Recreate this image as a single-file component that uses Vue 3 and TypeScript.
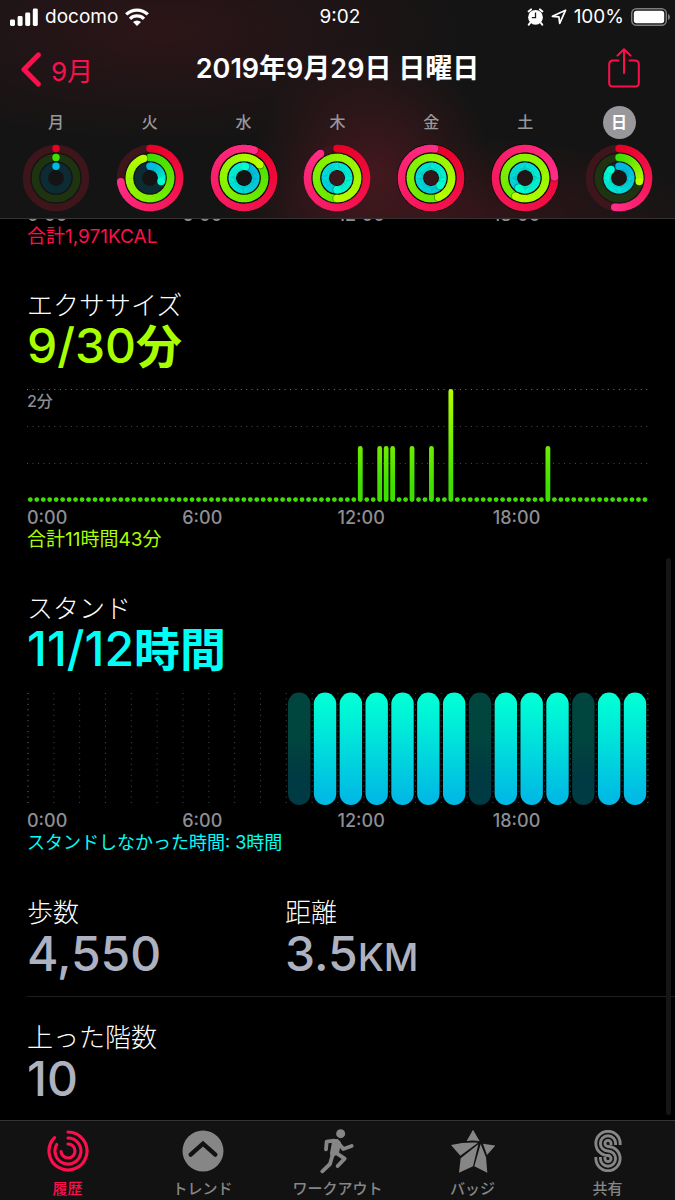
<script setup lang="ts">
interface Day {
  label: string
  move: number
  exercise: number
  stand: number
  selected?: boolean
}

interface Segment {
  d: string
  color: string
}

interface Ring {
  radius: number
  track: string
  startColor: string
  endColor: string
  value: number
  segments: Segment[]
  tip: { x: number; y: number }
  shade: { x: number; y: number }
}

const CENTER = 34

const ringStyles = [
  { radius: 29.5, track: '#3d151b', from: [233, 0, 38], to: [255, 45, 135] },
  { radius: 20.6, track: '#1e3310', from: [63, 224, 0], to: [184, 255, 0] },
  { radius: 11.7, track: '#0c2b33', from: [0, 184, 228], to: [0, 255, 208] },
]

const days: Day[] = [
  { label: '月', move: 0, exercise: 0, stand: 0 },
  { label: '火', move: 0.73, exercise: 0.95, stand: 0.3 },
  { label: '水', move: 1.056, exercise: 1.14, stand: 1.02 },
  { label: '木', move: 0.905, exercise: 1.5, stand: 1.5 },
  { label: '金', move: 1.02, exercise: 1.44, stand: 1.36 },
  { label: '土', move: 1.245, exercise: 1.575, stand: 1.59 },
  { label: '日', move: 0.523, exercise: 0.277, stand: 0.88, selected: true },
]

function pointAt(turn: number, radius: number) {
  const angle = turn * Math.PI * 2
  return { x: CENTER + Math.sin(angle) * radius, y: CENTER - Math.cos(angle) * radius }
}

function mix(from: number[], to: number[], t: number): string {
  return `rgb(${from.map((c, i) => Math.round(c + (to[i] - c) * t)).join(',')})`
}

function buildRings(day: Day): Ring[] {
  return [day.move, day.exercise, day.stand].map((value, i) => {
    const style = ringStyles[i]
    const begin = Math.max(0, value - 1)
    const count = value > 0 ? 60 : 0
    const step = (value - begin) / 60
    const segments = Array.from({ length: count }, (_, n) => {
      const a = begin + n * step
      const b = a + step + (n < count - 1 ? 0.004 : 0)
      const p = pointAt(a, style.radius)
      const q = pointAt(b, style.radius)
      return {
        d: `M${p.x} ${p.y}A${style.radius} ${style.radius} 0 0 1 ${q.x} ${q.y}`,
        color: mix(style.from, style.to, a / value),
      }
    })
    return {
      radius: style.radius,
      track: style.track,
      startColor: mix(style.from, style.to, 0),
      endColor: mix(style.from, style.to, value > 0 ? 1 : 0),
      value,
      segments,
      tip: pointAt(value, style.radius),
      shade: pointAt(value + 0.8 / (style.radius * 6.28), style.radius),
    }
  })
}

const week = days.map((day) => ({ ...day, rings: buildRings(day) }))

const hours = ['0:00', '6:00', '12:00', '18:00']

const minutes: Record<number, number> = { 51: 1, 54: 1, 55: 1, 56: 1, 59: 1, 62: 1, 65: 2, 80: 1 }
const exerciseBars = Array.from({ length: 96 }, (_, i) => {
  const height = [4.8, 56, 113][minutes[i] ?? 0]
  return { x: i * 6.47 + 0.9, y: 113 - height, height }
})

const idleHours = [10, 17, 21]
const standBars = Array.from({ length: 14 }, (_, i) => ({
  x: (i + 10) * 25.83 + 2.7,
  idle: idleHours.includes(i + 10),
}))
</script>

<template>
  <div class="screen">
    <header class="top">
      <div class="status">
        <div class="status-left">
          <svg width="28" height="18" viewBox="0 0 28 18" fill="#fff">
            <rect x="0" y="11.5" width="5" height="6.5" rx="1.4" />
            <rect x="7.6" y="8" width="5" height="10" rx="1.4" />
            <rect x="15.2" y="4.5" width="5" height="13.5" rx="1.4" />
            <rect x="22.8" y="0.5" width="5" height="17.5" rx="1.4" />
          </svg>
          <span>docomo</span>
          <svg width="24" height="18" viewBox="0 0 24 18" fill="none" stroke="#fff" stroke-width="3.2">
            <path d="M1.2 6.4A15.6 15.6 0 0 1 22.8 6.4" />
            <path d="M5 10.8A10 10 0 0 1 19 10.8" />
            <path d="M12 18L8 14A5.8 5.8 0 0 1 16 14Z" fill="#fff" stroke="none" />
          </svg>
        </div>
        <time>9:02</time>
        <div class="status-right">
          <svg width="17" height="18" viewBox="0 0 17 18">
            <g stroke="#fff" stroke-width="2" stroke-linecap="round">
              <path d="M1.6 3.4L4 1.4M15.4 3.4L13 1.4M3.4 14.5L1.8 16.6M13.6 14.5L15.2 16.6" />
            </g>
            <circle cx="8.5" cy="9.3" r="7.4" fill="#fff" />
            <path d="M8.5 4.6V9.6H4.8" fill="none" stroke="#1a1818" stroke-width="1.3" />
          </svg>
          <svg width="16" height="16" viewBox="0 0 16 16" fill="none" stroke="#fff" stroke-width="1.7" stroke-linejoin="round">
            <path d="M14.6 1.2L1.4 7.3L7.9 7.9L8.7 14.4Z" />
          </svg>
          <span>100%</span>
          <svg width="39" height="18" viewBox="0 0 39 18">
            <rect x="0.7" y="0.7" width="34.6" height="16.6" rx="4.8" fill="none" stroke="#7f7d7d" stroke-width="1.4" />
            <rect x="2.8" y="2.7" width="30.4" height="12.6" rx="2.8" fill="#fff" />
            <path d="M37 5.8Q39 7 39 9T37 12.2Z" fill="#7f7d7d" />
          </svg>
        </div>
      </div>

      <div class="nav">
        <button class="back" type="button">
          <svg width="20" height="35" viewBox="0 0 20 35" fill="none" stroke="#fc0f4c" stroke-width="5" stroke-linecap="round" stroke-linejoin="round">
            <path d="M17.3 2.9L3 17.5L17.3 32.1" />
          </svg>
          <span>9月</span>
        </button>
        <h1>2019年9月29日 日曜日</h1>
        <button class="share" type="button" aria-label="共有">
          <svg width="32" height="40" viewBox="0 0 32 40" fill="none" stroke="#fc0f4c" stroke-width="2" stroke-linecap="round" stroke-linejoin="round">
            <path d="M10.5 12.6H5Q1.2 12.6 1.2 16.2V35Q1.2 38.6 5 38.6H27Q30.8 38.6 30.8 35V16.2Q30.8 12.6 27 12.6H21.5" />
            <path d="M16 25V1.8M9.4 7.6L16 1.2L22.6 7.6" />
          </svg>
        </button>
      </div>

      <div class="week">
        <button v-for="day in week" :key="day.label" class="day" type="button">
          <span class="day-label" :class="{ selected: day.selected }">{{ day.label }}</span>
          <svg width="68" height="68" viewBox="0 0 68 68" fill="none" stroke-width="7.5">
            <template v-for="ring in day.rings" :key="ring.radius">
              <circle v-if="ring.value >= 1" cx="34" cy="34" :r="ring.radius" stroke="#0a0505" stroke-width="8.8" />
              <circle cx="34" cy="34" :r="ring.radius" :stroke="ring.track" />
              <circle v-if="ring.value < 1" cx="34" :cy="34 - ring.radius" r="3.7" :fill="ring.startColor" stroke="none" />
              <path v-for="segment in ring.segments" :key="segment.d" :d="segment.d" :stroke="segment.color" />
              <template v-if="ring.value > 0">
                <circle v-if="ring.value > 0.93" :cx="ring.shade.x" :cy="ring.shade.y" r="3.7" fill="#000" fill-opacity="0.4" stroke="none" />
                <circle :cx="ring.tip.x" :cy="ring.tip.y" r="3.75" :fill="ring.endColor" stroke="none" />
              </template>
            </template>
          </svg>
        </button>
      </div>
    </header>

    <main>
      <section class="move">
        <div class="axis"><span v-for="hour in hours" :key="hour">{{ hour }}</span></div>
        <p class="total">合計1,971KCAL</p>
      </section>

      <section class="exercise">
        <h2>エクササイズ</h2>
        <p class="value">9/30<span class="unit">分</span></p>
        <div class="chart">
          <span class="scale">2分</span>
          <svg viewBox="0 0 621 113">
            <defs>
              <linearGradient id="exercise-fill" gradientUnits="userSpaceOnUse" x1="0" y1="0" x2="0" y2="113">
                <stop offset="0" stop-color="#b4ff00" />
                <stop offset="0.85" stop-color="#3fe000" />
                <stop offset="1" stop-color="#3fe000" />
              </linearGradient>
            </defs>
            <g stroke-dasharray="1 4.48" stroke-width="1">
              <path d="M0 0.5H621" stroke="#777" />
              <path d="M0 37.5H621M0 74.5H621" stroke="#484848" />
            </g>
            <rect
              v-for="bar in exerciseBars"
              :key="bar.x"
              :x="bar.x"
              :y="bar.y"
              width="4.8"
              :height="bar.height"
              rx="2.4"
              fill="url(#exercise-fill)"
            />
          </svg>
        </div>
        <div class="axis"><span v-for="hour in hours" :key="hour">{{ hour }}</span></div>
        <p class="total">合計11時間43分</p>
      </section>

      <section class="stand">
        <h2>スタンド</h2>
        <p class="value">11/12<span class="unit">時間</span></p>
        <div class="chart">
          <svg viewBox="0 0 621 113">
            <defs>
              <linearGradient id="stand-fill" x1="0" y1="0" x2="0" y2="1">
                <stop offset="0.05" stop-color="#00ffd5" />
                <stop offset="0.95" stop-color="#00b9e4" />
              </linearGradient>
              <linearGradient id="idle-fill" x1="0" y1="0" x2="0" y2="1">
                <stop offset="0.4" stop-color="#00463f" />
                <stop offset="0.75" stop-color="#003a42" />
              </linearGradient>
            </defs>
            <g stroke="#484848" stroke-dasharray="1 4.45">
              <path v-for="n in 25" :key="n" :d="`M${(n - 1) * 25.83 + 1} 1V113`" :stroke="n === 1 || n === 25 ? '#777' : undefined" />
            </g>
            <rect
              v-for="bar in standBars"
              :key="bar.x"
              :x="bar.x"
              y="0.6"
              width="22.4"
              height="112.4"
              rx="11.2"
              :fill="bar.idle ? 'url(#idle-fill)' : 'url(#stand-fill)'"
            />
          </svg>
        </div>
        <div class="axis"><span v-for="hour in hours" :key="hour">{{ hour }}</span></div>
        <p class="total">スタンドしなかった時間: 3時間</p>
      </section>

      <section class="stats">
        <div>
          <h2>歩数</h2>
          <p class="value">4,550</p>
        </div>
        <div>
          <h2>距離</h2>
          <p class="value">3.5<span class="km">KM</span></p>
        </div>
      </section>
      <section class="stats floors">
        <div>
          <h2>上った階数</h2>
          <p class="value">10</p>
        </div>
      </section>
      <div class="scrollbar"></div>
    </main>

    <nav class="tabs">
      <a href="#history" class="current" aria-current="page">
        <svg width="42" height="42" viewBox="-63 -63 126 126" fill="none" stroke="currentColor" stroke-width="9.5" stroke-linecap="round">
          <path d="M0 -57A57 57 0 1 1 -40.3 -40.3" />
          <path d="M0 -39A39 39 0 1 1 -33.8 -19.5" />
          <path d="M0 -21A21 21 0 1 1 -20.9 2" />
        </svg>
        <span>履歴</span>
      </a>
      <a href="#trends">
        <svg width="42" height="42" viewBox="-63 -63 126 126">
          <circle r="61.5" fill="currentColor" />
          <path d="M-37 11L0 -22L37 11" fill="none" stroke="#121212" stroke-width="13" stroke-linecap="round" stroke-linejoin="miter" />
        </svg>
        <span>トレンド</span>
      </a>
      <a href="#workouts">
        <svg width="42" height="46" viewBox="52 22 126 138" fill="none" stroke="currentColor" stroke-width="11.5" stroke-linecap="round" stroke-linejoin="round">
          <circle cx="123" cy="39" r="13.5" fill="currentColor" stroke="none" />
          <path d="M103 60L81 63L79 86" />
          <path d="M102 59L113 59L120 67L114 96L97 106L95 98Z" fill="currentColor" stroke-width="8" />
          <path d="M116 67L131 85L156 76" />
          <path d="M108 96L135 114L114 136" />
          <path d="M99 102L91 130L68 152" />
        </svg>
        <span>ワークアウト</span>
      </a>
      <a href="#badges">
        <svg width="44" height="44" viewBox="345 60 132 132" fill="currentColor">
          <path d="M411 62L431 97Q411 92 392 96Z" />
          <path d="M345 108Q385 99 426 101L373 140Z" />
          <path d="M374 148L427 106L411 172L369 191Z" />
          <path d="M434 105L450 145L454 191L415 172Z" />
          <path d="M441 104L478 110L453 138Z" />
        </svg>
        <span>バッジ</span>
      </a>
      <a href="#sharing">
        <svg width="28" height="42" viewBox="0 0 28 42" fill="none">
          <path v-for="(width, i) in [12, 6.2, 2.9]" :key="width" d="M21.6 15V13.4A7.6 7.6 0 1 0 14 21A7.6 7.6 0 1 1 6.4 28.6V27" :stroke="i === 1 ? '#121212' : 'currentColor'" :stroke-width="width" />
        </svg>
        <span>共有</span>
      </a>
    </nav>
  </div>
</template>

<style>
body {
  margin: 0;
  background: #000;
}
</style>

<style scoped>
.screen {
  display: flex;
  flex-direction: column;
  height: 100vh;
  background: #000;
  color: #fff;
  font-family: Inter, "Noto Sans CJK JP", sans-serif;
}

h1,
h2,
p {
  margin: 0;
}

button {
  padding: 0;
  border: 0;
  background: none;
  color: inherit;
  font: inherit;
}

svg {
  display: block;
}

.top {
  flex: none;
  border-bottom: 1px solid #343232;
  background:
    radial-gradient(ellipse 120px 130px at 55% 80%, #43181e, #43181e00),
    radial-gradient(ellipse 240px 80px at 68% 100%, #341519, #34151900),
    radial-gradient(ellipse 300px 110px at 24% 14%, #2c1518, #2c151800),
    #151414;
}

.status {
  display: grid;
  grid-template-columns: 1fr auto 1fr;
  align-items: center;
  height: 33px;
  padding: 0 5px 0 10px;
  font-size: 19px;
  line-height: 33px;
}

.status-left,
.status-right {
  display: flex;
  align-items: center;
  gap: 7px;
}

.status-right {
  justify-content: flex-end;
}

.nav {
  display: grid;
  grid-template-columns: 1fr auto 1fr;
  align-items: center;
  height: 72px;
  padding: 0 21px;
}

.back {
  display: flex;
  align-items: center;
  gap: 10px;
  color: #fc0f4c;
  font-size: 26px;
  font-weight: 400;
}

h1 {
  font-size: 27px;
  font-weight: 600;
  line-height: 32px;
}

.share {
  justify-self: end;
  padding: 0 14px 2px;
}

.week {
  display: grid;
  grid-template-columns: repeat(7, 1fr);
  height: 113px;
  padding: 0 9px;
}

.day {
  display: flex;
  flex-direction: column;
  align-items: center;
  gap: 5px;
}

.day-label {
  width: 33px;
  height: 33px;
  margin-top: 1px;
  border-radius: 50%;
  color: #98979b;
  font-size: 16px;
  font-weight: 500;
  line-height: 33px;
  text-align: center;
}

.day-label.selected {
  background: #98979b;
  color: #fff;
  font-weight: 700;
}

main {
  position: relative;
  flex: 1;
  min-height: 0;
  overflow: hidden;
}

section {
  padding: 0 27px;
}

.move {
  margin-top: -15px;
  color: #fc0f4c;
}

.exercise,
.stand {
  margin-top: 42px;
}

.exercise {
  color: #a8ff00;
}

.stand {
  color: #00fff6;
}

h2 {
  color: #fff;
  font-size: 26px;
  font-weight: 300;
  line-height: 32px;
}

.value {
  font-size: 48px;
  font-weight: 500;
  line-height: 48px;
  white-space: nowrap;
}

.unit {
  font-size: 46px;
  font-weight: 600;
  line-height: 32px;
}

.chart {
  position: relative;
  margin: 19px 0 5px;
}

.chart svg {
  width: 100%;
  height: auto;
  overflow: visible;
}

.scale {
  position: absolute;
  top: 0;
  left: 0;
  color: #8e8e93;
  font-size: 16px;
  font-weight: 500;
  line-height: 24px;
}

.axis {
  display: grid;
  grid-template-columns: repeat(4, 1fr);
  color: #8e8e93;
  font-size: 18px;
  font-weight: 500;
  line-height: 22px;
}

.total {
  font-size: 19px;
  font-weight: 400;
  line-height: 22px;
}

.stand .total {
  font-size: 18px;
}

.stats {
  display: grid;
  grid-template-columns: 258px 1fr;
  margin: 43px 0 17px;
  color: #adb1c0;
}

.stats .value {
  line-height: 50px;
}

.floors {
  margin: 0 0 0 27px;
  padding: 25px 0 0;
  border-top: 1px solid #1d2022;
}

.km {
  font-size: 38px;
  line-height: 32px;
}

.scrollbar {
  position: absolute;
  top: 339px;
  right: 4px;
  bottom: 5px;
  width: 5px;
  border-radius: 3px;
  background: #151515;
}

.tabs {
  display: grid;
  flex: none;
  grid-template-columns: repeat(5, 1fr);
  height: 79px;
  border-top: 1px solid #343434;
  background: #121212;
}

.tabs a {
  display: grid;
  grid-template-rows: 60px 16px;
  justify-items: center;
  align-items: center;
  align-content: start;
  color: #868686;
  font-size: 15px;
  font-weight: 500;
  line-height: 16px;
  text-decoration: none;
  white-space: nowrap;
}

.tabs a.current {
  color: #fc0f4c;
}
</style>
